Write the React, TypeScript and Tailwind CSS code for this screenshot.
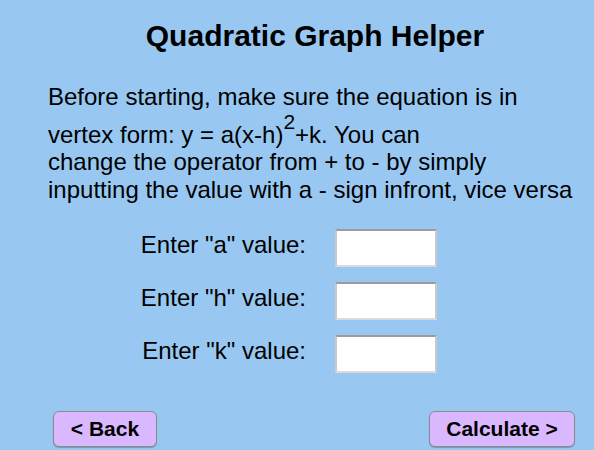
import React from "react";

const font = { fontFamily: '"Liberation Sans", Arial, sans-serif' };

function Row({ label }: { label: string }) {
  return (
    <div className="flex items-center h-[38px]">
      <div className="w-[258px] pb-[6px] text-right text-[24px] leading-[28px] text-black whitespace-nowrap">{label}</div>
      <input
        type="text"
        className="ml-[29px] w-[102px] h-[38px] bg-white border-2 border-t-[#9c9c9c] border-x-[#c9c9c9] border-b-[#dadada] outline-none"
      />
    </div>
  );
}

export default function App() {
  return (
    <div className="w-[594px] h-[450px] bg-[#98c8f2] flex flex-col overflow-hidden" style={font}>
      <div className="pl-[48px] pr-[12px]">
        <h1 className="pt-[19px] text-center text-[30px] leading-[34px] font-bold text-black whitespace-nowrap">
          Quadratic Graph Helper
        </h1>
        <div className="mt-[30px] text-[24px] text-black whitespace-nowrap">
          <div className="leading-[28px]">Before starting, make sure the equation is in</div>
          <div className="leading-[28px] mt-[10px]">
            vertex form: y = a(x-h)<span className="relative -top-[14px] text-[21px] leading-[0px]">2</span>+k. You can
          </div>
          <div className="leading-[28px] -mt-[1px]">change the operator from + to - by simply</div>
          <div className="leading-[28px]">inputting the value with a - sign infront, vice versa</div>
        </div>
        <div className="mt-[25px] flex flex-col gap-[15px]">
          <Row label={'Enter "a" value:'} />
          <Row label={'Enter "h" value:'} />
          <Row label={'Enter "k" value:'} />
        </div>
      </div>
      <div className="mt-[38px] pl-[53px] pr-[19px] flex justify-between">
        <button className="w-[104px] h-[36px] bg-[#dab8ff] border-[1.5px] border-[#8c8c8c] rounded-[6px] text-[21px] font-bold text-black shadow-[0_1px_1px_rgba(0,0,0,0.25)]">
          &lt; Back
        </button>
        <button className="w-[146px] h-[36px] bg-[#dab8ff] border-[1.5px] border-[#8c8c8c] rounded-[6px] text-[21px] font-bold text-black shadow-[0_1px_1px_rgba(0,0,0,0.25)]">
          Calculate &gt;
        </button>
      </div>
    </div>
  );
}
